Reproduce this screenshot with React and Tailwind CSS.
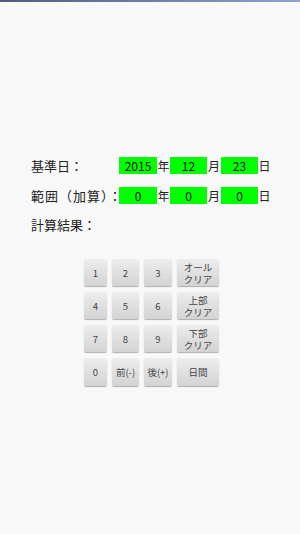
import React from "react";

const font = { fontFamily: '"Noto Sans CJK JP", "Noto Sans", sans-serif' };

function Box({ children }) {
  return (
    <div className="h-[17px] bg-[#00ff00] text-black text-[12px] leading-[17px] text-center">
      {children}
    </div>
  );
}

function DateRow({ label, y, m, d, mt }) {
  return (
    <div className={`flex items-center h-[17px] ${mt}`}>
      <div className="w-[88px] text-[13px] text-[#222] whitespace-nowrap">{label}</div>
      <div className="w-[38px]"><Box>{y}</Box></div>
      <div className="w-[13px] text-[12px] text-[#222] text-center">年</div>
      <div className="w-[37px]"><Box>{m}</Box></div>
      <div className="w-[14px] text-[12px] text-[#222] text-center">月</div>
      <div className="w-[37px]"><Box>{d}</Box></div>
      <div className="w-[13px] text-[12px] text-[#222] text-center">日</div>
    </div>
  );
}

function Btn({ w, children }) {
  return (
    <div
      className={`${w} h-full rounded-[2px] bg-gradient-to-b from-[#ededed] to-[#d3d3d3] shadow-[0_1px_1px_rgba(0,0,0,0.3)] flex items-center justify-center text-[9.5px] leading-[12px] text-[#444] text-center whitespace-nowrap`}
    >
      {children}
    </div>
  );
}

function BtnRow({ cells, h }) {
  return (
    <div className={`flex gap-[5px] ${h}`}>
      <Btn w="w-[23px]">{cells[0]}</Btn>
      <Btn w="w-[27px]">{cells[1]}</Btn>
      <Btn w="w-[28px]">{cells[2]}</Btn>
      <Btn w="w-[42px]">{cells[3]}</Btn>
    </div>
  );
}

export default function App() {
  return (
    <div className="w-[300px] h-[534px] bg-[#f8f8f8] flex flex-col" style={font}>
      <div className="h-[2px] bg-gradient-to-r from-[#555a7a] to-[#8ea4cc]" />
      <div className="pl-[31px] pt-[155px] flex flex-col">
        <DateRow label="基準日：" y="2015" m="12" d="23" mt="" />
        <DateRow label={<span className="tracking-[1px]">範囲（加算）：</span>} y="0" m="0" d="0" mt="mt-[13px]" />
        <div className="mt-[12px] h-[17px] text-[13px] leading-[17px] text-[#222]">計算結果：</div>
      </div>
      <div className="mt-[26px] pl-[84px] flex flex-col gap-[6px]">
        <BtnRow h="h-[27px]" cells={["1", "2", "3", <span>オール<br />クリア</span>]} />
        <BtnRow h="h-[27px]" cells={["4", "5", "6", <span>上部<br />クリア</span>]} />
        <BtnRow h="h-[27px]" cells={["7", "8", "9", <span>下部<br />クリア</span>]} />
        <BtnRow h="h-[28px]" cells={["0", "前(-)", "後(+)", "日間"]} />
      </div>
    </div>
  );
}
